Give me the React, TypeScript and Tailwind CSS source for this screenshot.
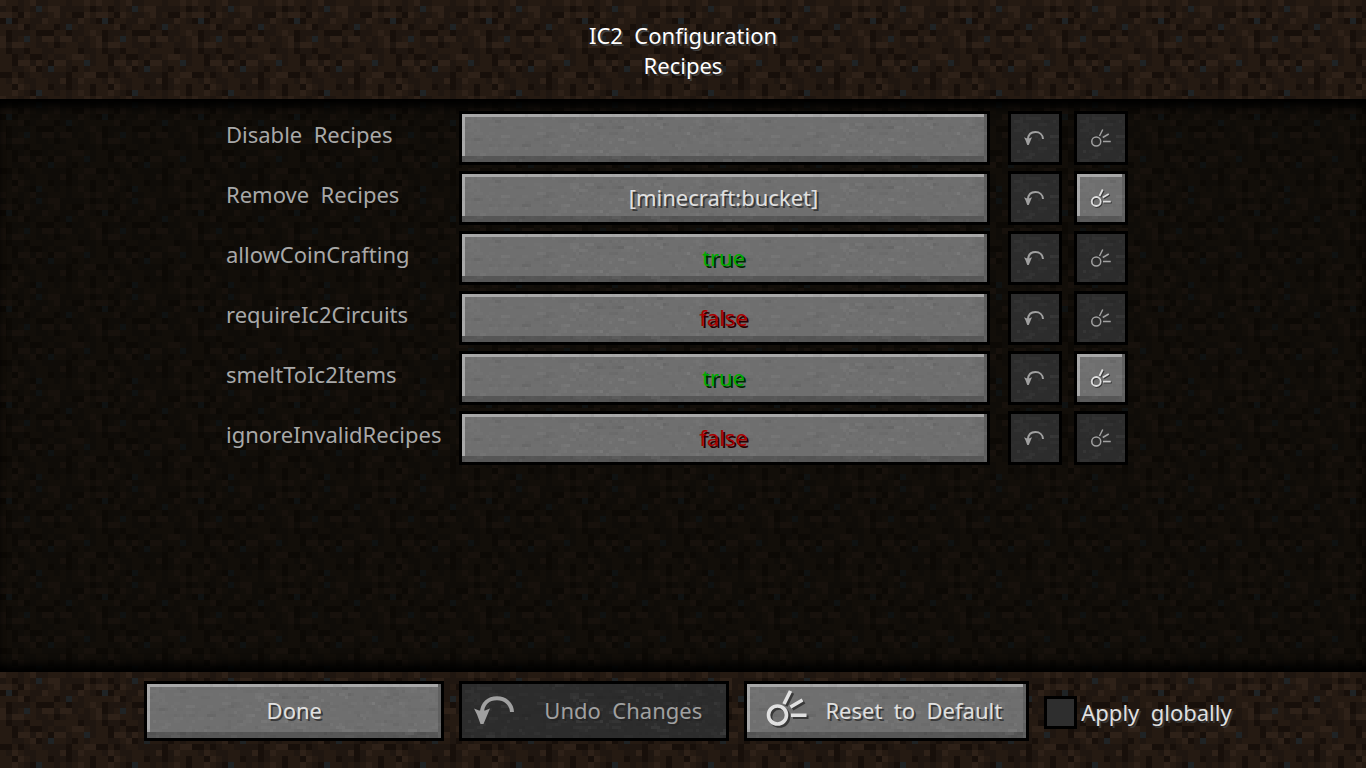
import type { ReactNode } from "react"
import clsx from "clsx"

// One 16x16 dirt block, tiled over the whole screen. Each letter is a tone.
const DIRT = [
  "LbbdbLddbbbdbbLb",
  "dbkdbdsbLLddddbk",
  "LLbkLbddbLdbkkLb",
  "kskbbddLbbdddLbd",
  "bbbLkdbbbkdsbdbb",
  "bkdddbkkkbbkddbL",
  "LkdbsbdLLdLLdbdb",
  "LdLLbbddbkdbbddb",
  "bkddkbbddbbbbkdd",
  "bbkdbkkdbddbLLbd",
  "bbkLLdLbkLLdbbsd",
  "bbddbLkdsbbdkbdb",
  "kkbkdbbddddkbbLL",
  "bdLbddbbddLkdLbb",
  "bbkLbdbbkddkdbbk",
  "bbLbdksbbdbdbLbk",
]

const DIRT_TONES: Record<string, string> = {
  L: "#2e2118",
  b: "#251a12",
  d: "#1f1610",
  k: "#170f0a",
  s: "#1f2325",
}

const DIRT_PX = 6
const STONE_PX = 3
const STONE_COLS = 90
const STONE_ROWS = 20

type Speck = { x: number; y: number; w: number; light: boolean; alpha: number }

function makeSpecks(): Speck[] {
  let seed = 1337
  const rand = () => {
    seed = (seed * 16807) % 2147483647
    return seed / 2147483647
  }
  return Array.from({ length: 560 }, () => ({
    x: Math.floor(rand() * STONE_COLS),
    y: Math.floor(rand() * STONE_ROWS),
    w: 1 + Math.floor(rand() * 3),
    light: rand() > 0.5,
    alpha: 0.01 + rand() * rand() * 0.05,
  }))
}

const SPECKS = makeSpecks()

function Textures() {
  return (
    <svg className="absolute h-0 w-0" aria-hidden="true">
      <defs>
        <pattern
          id="dirt"
          width={16 * DIRT_PX}
          height={16 * DIRT_PX}
          patternUnits="userSpaceOnUse"
          shapeRendering="crispEdges"
        >
          {DIRT.flatMap((row, y) =>
            row.split("").map((tone, x) => (
              <rect
                key={`${x}-${y}`}
                x={x * DIRT_PX}
                y={y * DIRT_PX}
                width={DIRT_PX}
                height={DIRT_PX}
                fill={DIRT_TONES[tone]}
              />
            )),
          )}
        </pattern>
        <pattern
          id="stone"
          width={STONE_COLS * STONE_PX}
          height={STONE_ROWS * STONE_PX}
          patternUnits="userSpaceOnUse"
          shapeRendering="crispEdges"
        >
          {SPECKS.map((s, i) => (
            <rect
              key={i}
              x={s.x * STONE_PX}
              y={s.y * STONE_PX}
              width={s.w * STONE_PX}
              height={STONE_PX}
              fill={s.light ? "#fff" : "#000"}
              fillOpacity={s.alpha}
            />
          ))}
        </pattern>
      </defs>
    </svg>
  )
}

function UndoIcon({ className }: { className?: string }) {
  return (
    <svg viewBox="0 0 40 28" className={className} aria-hidden="true">
      <path
        d="M38 16C37.500 7.500 31 2.200 23 2.200C14.500 2.200 8.500 7.500 7.800 17"
        fill="none"
        stroke="currentColor"
        strokeWidth="4"
      />
      <path d="M0 12.500L5 14.500H11L16 12.500L13.500 18.500L9.500 28H6.500L3 18.500Z" fill="currentColor" />
    </svg>
  )
}

function ResetIcon({ className, bold }: { className?: string; bold?: boolean }) {
  return (
    <svg
      viewBox="0 0 40 36"
      className={className}
      fill="none"
      stroke="currentColor"
      strokeWidth={bold ? 3.6 : 3}
      overflow="visible"
      aria-hidden="true"
    >
      <circle cx="10.500" cy="25" r="9" />
      <path d="M17 14L23.500 1M23.500 17L35.500 10M24 25.200H39.500" />
    </svg>
  )
}

function StoneButton({
  label,
  disabled,
  className,
  children,
}: {
  label?: string
  disabled?: boolean
  className?: string
  children?: ReactNode
}) {
  return (
    <button
      type="button"
      aria-label={label}
      disabled={disabled}
      className={clsx(
        "relative flex items-center justify-center border-3 border-black",
        disabled
          ? "bg-[#2c2c2c] text-[#a0a0a0] text-shadow-[2px_2px_0_#252525]"
          : "bg-[#6f6f6f] text-[#e0e0e0] shadow-[inset_-3px_0_0_#606060,inset_0_-6px_0_#565656,inset_3px_0_0_#a8a8a8,inset_0_3px_0_#a8a8a8] text-shadow-[2px_2px_0_#383838]",
        className,
      )}
    >
      <svg className="absolute inset-0 h-full w-full" aria-hidden="true">
        <rect width="100%" height="100%" fill="url(#stone)" />
      </svg>
      {children}
    </button>
  )
}

type Entry = { name: string; value: string; changed?: boolean }

const ENTRIES: Entry[] = [
  { name: "Disable  Recipes", value: "" },
  { name: "Remove  Recipes", value: "[minecraft:bucket]", changed: true },
  { name: "allowCoinCrafting", value: "true" },
  { name: "requireIc2Circuits", value: "false" },
  { name: "smeltToIc2Items", value: "true", changed: true },
  { name: "ignoreInvalidRecipes", value: "false" },
]

function EntryRow({ name, value, changed }: Entry) {
  return (
    <li className="flex items-center">
      <span className="w-[233px] shrink-0 pb-2 text-[#a8a8a8]">{name}</span>
      <StoneButton
        label={value ? `${name}: ${value}` : name}
        className="h-[54px] flex-1 pr-0.5 pb-0.5"
      >
        <span
          className={clsx(
            "relative",
            value === "true" && "text-[#00aa00] text-shadow-[2px_2px_0_#002a00]",
            value === "false" && "text-[#aa0000] text-shadow-[2px_2px_0_#2a0000]",
          )}
        >
          {value}
        </span>
      </StoneButton>
      <StoneButton label={`Undo ${name}`} disabled className="ml-[18px] size-[54px] pr-0.5">
        <UndoIcon className="relative h-3.5 w-5" />
      </StoneButton>
      <StoneButton label={`Reset ${name}`} disabled={!changed} className="ml-3 size-[54px]">
        <ResetIcon
          bold={changed}
          className={clsx(
            "relative h-[18px] w-5",
            changed && "drop-shadow-[1px_1px_0_#383838]",
          )}
        />
      </StoneButton>
    </li>
  )
}

export default function App() {
  return (
    <div className="relative flex min-h-screen flex-col whitespace-pre font-['Noto_Sans',sans-serif] text-[22px] leading-[30px]">
      <Textures />
      <svg className="absolute inset-0 -z-10 h-full w-full" aria-hidden="true">
        <rect width="100%" height="100%" fill="url(#dirt)" />
      </svg>

      <header className="pt-5 pb-[19px] text-center text-white text-shadow-[2px_2px_0_#3f3f3f]">
        <h1>IC2  Configuration</h1>
        <h2>Recipes</h2>
      </header>

      <main className="flex-1 bg-[#020301]/52 pt-3 pr-3 shadow-[inset_0_12px_10px_-4px_#000,inset_0_-12px_10px_-4px_#000]">
        <ul className="mx-auto flex w-full max-w-[902px] flex-col gap-1.5">
          {ENTRIES.map((entry) => (
            <EntryRow key={entry.name} {...entry} />
          ))}
        </ul>
      </main>

      <footer className="flex items-center justify-center gap-[15px] pt-[9px] pb-[27px] pl-2.5">
        <StoneButton className="h-[60px] w-[300px] pb-0.5">
          <span className="relative">Done</span>
        </StoneButton>
        <StoneButton disabled className="h-[60px] w-[270px] gap-[30px] pr-3 pb-0.5">
          <UndoIcon className="relative h-7 w-10" />
          <span className="relative">Undo  Changes</span>
        </StoneButton>
        <StoneButton className="h-[60px] w-[285px] gap-[18px] pr-1 pb-0.5">
          <ResetIcon bold className="relative mb-1 h-9 w-10 drop-shadow-[2px_2px_0_#383838]" />
          <span className="relative">Reset  to  Default</span>
        </StoneButton>
        <label className="flex items-center gap-1 pt-0.5 text-[#e0e0e0] text-shadow-[2px_2px_0_#383838]">
          <input
            type="checkbox"
            className="size-[33px] appearance-none border-3 border-black bg-[#2e2e2e] checked:bg-[#6f6f6f]"
          />
          Apply  globally
        </label>
      </footer>
    </div>
  )
}
